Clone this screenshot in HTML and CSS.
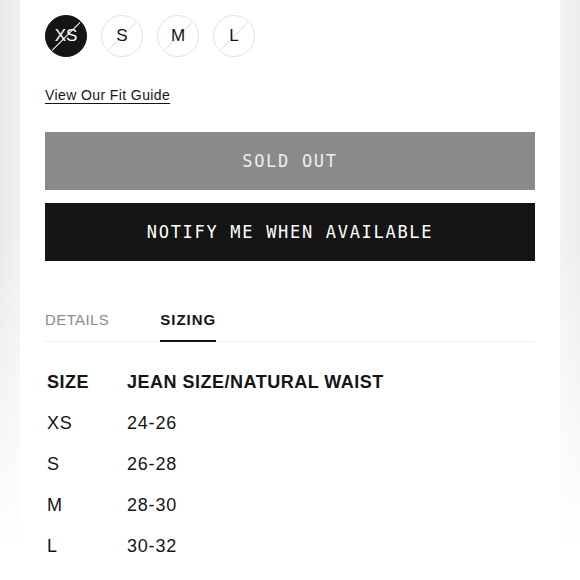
FILE: index.html
```html
<!DOCTYPE html>
<html>
<head>
<meta charset="utf-8">
<link rel="stylesheet" href="styles.css">
</head>
<body>
<div class="page">
  <div class="sizes">
    <div class="size active"><span>XS</span></div>
    <div class="size"><span>S</span></div>
    <div class="size"><span>M</span></div>
    <div class="size"><span>L</span></div>
  </div>
  <a class="fit" href="#">View Our Fit Guide</a>
  <div class="btn sold">SOLD OUT</div>
  <div class="btn notify">NOTIFY ME WHEN AVAILABLE</div>
  <div class="tabs">
    <div class="tab">DETAILS</div>
    <div class="tab current">SIZING</div>
  </div>
  <div class="table">
    <div class="th">SIZE</div><div class="th">JEAN SIZE/NATURAL WAIST</div>
    <div class="td">XS</div><div class="td">24-26</div>
    <div class="td">S</div><div class="td">26-28</div>
    <div class="td">M</div><div class="td">28-30</div>
    <div class="td">L</div><div class="td">30-32</div>
  </div>
</div>
</body>
</html>
```

FILE: styles.css
```css
html, body {
  margin: 0;
  height: 100%;
}
body {
  background:
    linear-gradient(to bottom, rgba(255,255,255,0) 0%, rgba(255,255,255,0) 40%, #fff 95%),
    linear-gradient(to right, #e9e9e9 0px, #f1f1f1 20px, #fff 20px, #fff 560px, #f3f3f3 560px, #ececec 580px);
  font-family: "Liberation Sans", Arial, sans-serif;
  color: #151515;
  overflow: hidden;
}
.page {
  width: 490px;
  margin-left: 20px;
  background: #fff;
  padding: 15px 25px 0;
  height: 565px;
  display: flex;
  flex-direction: column;
  align-items: flex-start;
}
.sizes {
  display: flex;
  gap: 14px;
}
.size {
  position: relative;
  box-sizing: border-box;
  width: 42px;
  height: 42px;
  border: 1px solid #e4e4e4;
  border-radius: 50%;
  display: flex;
  align-items: center;
  justify-content: center;
  font-size: 17px;
  overflow: hidden;
  color: #151515;
}
.size span {
  position: relative;
  z-index: 1;
}
.size::after {
  content: "";
  position: absolute;
  left: 0;
  top: 50%;
  width: 100%;
  height: 1px;
  background: #e2e2e2;
  transform: rotate(-45deg);
}
.size.active {
  background: #151515;
  border-color: #151515;
  color: #fff;
}
.size.active span {
  z-index: 0;
}
.size.active::after {
  background: #fff;
  z-index: 1;
}
.fit {
  margin-top: 28px;
  font-size: 14px;
  line-height: 20px;
  color: #151515;
  text-decoration: underline;
  text-underline-offset: 3px;
  letter-spacing: 0.4px;
}
.btn {
  align-self: stretch;
  height: 58px;
  display: flex;
  align-items: center;
  justify-content: center;
  font-family: "DejaVu Sans Mono", monospace;
  font-size: 17px;
  letter-spacing: 1.7px;
}
.sold {
  margin-top: 27px;
  background: #8a8a8a;
  color: #eeeeee;
}
.notify {
  margin-top: 13px;
  background: #151515;
  color: #fff;
}
.tabs {
  align-self: stretch;
  margin-top: 50px;
  display: flex;
  gap: 51px;
  border-bottom: 1px solid #eeeeee;
}
.tab {
  font-size: 15px;
  letter-spacing: 0.4px;
  color: #8c8c8c;
  padding-bottom: 12px;
  border-bottom: 2px solid transparent;
  margin-bottom: -1px;
}
.tab.current {
  color: #151515;
  font-weight: bold;
  letter-spacing: 1px;
  border-bottom-color: #151515;
}
.table {
  margin-top: 20px;
  margin-left: 2px;
  display: grid;
  grid-template-columns: 80px auto;
  grid-auto-rows: 41px;
  align-items: center;
  font-size: 18px;
  letter-spacing: 0.8px;
}
.th {
  font-weight: bold;
  letter-spacing: 0.5px;
}
```
